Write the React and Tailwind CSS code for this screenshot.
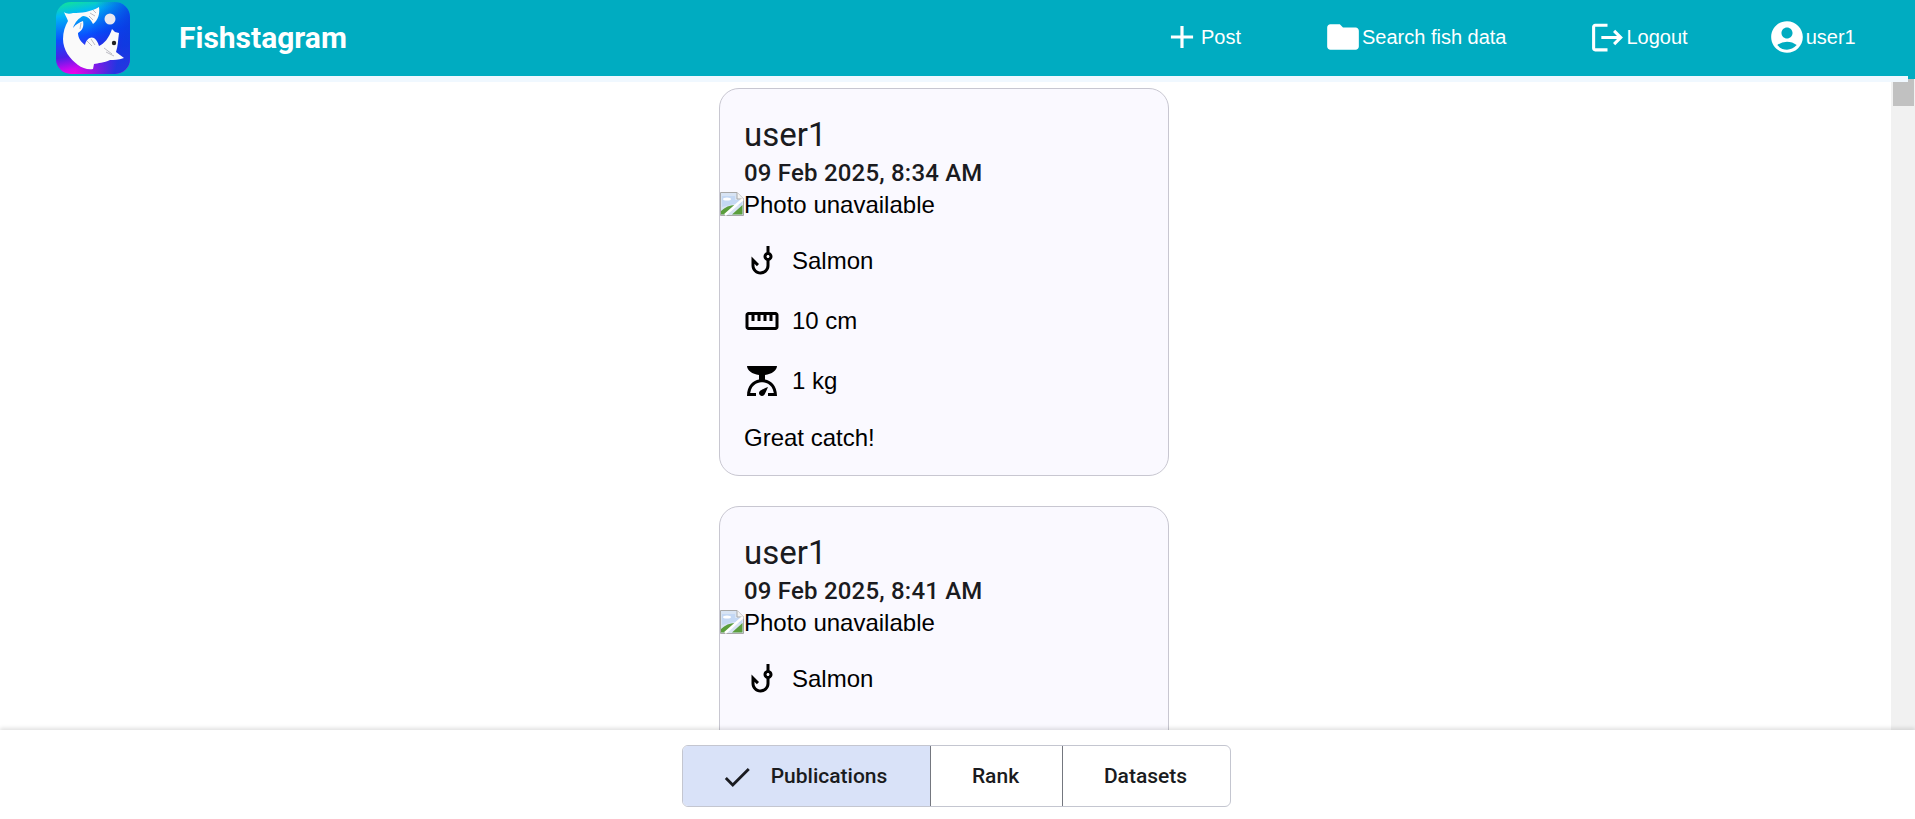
import React from "react";
import { MdAdd, MdFolder, MdLogout, MdAccountCircle, MdOutlinePhishing, MdOutlineStraighten, MdScale, MdCheck } from "react-icons/md";

function Logo() {
  return (
    <svg viewBox="0 0 74 72" className="w-[74px] h-[72px] shrink-0">
      <defs>
        <linearGradient id="lg" x1="0.2" y1="0" x2="0.4" y2="1">
          <stop offset="0" stopColor="#10e0a0" />
          <stop offset="0.16" stopColor="#00b8f5" />
          <stop offset="0.48" stopColor="#0a50ff" />
          <stop offset="0.72" stopColor="#4a20e8" />
          <stop offset="0.9" stopColor="#d008f0" />
          <stop offset="1" stopColor="#ff00e0" />
        </linearGradient>
        <linearGradient id="lg2" x1="0" y1="0" x2="1" y2="0.3">
          <stop offset="0.5" stopColor="#0030e0" stopOpacity="0" />
          <stop offset="1" stopColor="#0a3ce0" stopOpacity="0.9" />
        </linearGradient>
      </defs>
      <rect width="74" height="72" rx="15" fill="url(#lg)" />
      <rect width="74" height="72" rx="15" fill="url(#lg2)" />
      <path d="M8 10 C10 12 14 12 17 11 C25 11 35 10 43 5 C44 12 42 18 37 22 C35 18 32 14 27 14 C23 16 19 20 17 26 C20 22 24 20 27 19 C28 24 27 28 22 31 C22 36 25 40 29 43 C30 38 34 34 38 36 C41 38 42 41 43 44 C48 42 53 36 56 27 L59 30 L63 31 C62 38 62 44 60 50 L68 56 C62 58 58 58 54 58 C48 61 42 61 38 62 L37 67 C32 68 26 66 22 63 C14 57 7 48 7 37 C7 30 9 24 12 19 C11 16 9 13 8 10 Z" fill="#fafafa" />
      <path d="M37 8 L40 11 M34 11 L39 14 M33 14 L37 18 M31 39 L36 44 M35 37 L39 43 M48 46 L56 52 M50 50 L58 54 M25 21 L24 27" stroke="#b4b4bc" strokeWidth="0.9" fill="none" />
      <circle cx="54" cy="17" r="5.5" fill="#e8e8f0" />
      <circle cx="58" cy="41" r="2.2" fill="#222" />
    </svg>
  );
}

function BrokenImage() {
  return (
    <svg viewBox="0 0 24 24" className="w-6 h-6 shrink-0 mb-[3px]">
      <path d="M0.5 0.5 H17 L23.5 7 V23.5 H0.5 Z" fill="#d8e4f4" stroke="#a8a8a8" />
      <path d="M17 0.5 V7 H23.5" fill="#f4f4f4" stroke="#a8a8a8" />
      <path d="M2 4 H15 V8 H22 V14 L14 12 L2 15 Z" fill="#c4d8f4" />
      <ellipse cx="7" cy="7" rx="4" ry="1.6" fill="#fff" />
      <path d="M1 22.5 V19 C5 15 10 13 15 13 L5 22.5 Z M12 22.5 L22.5 13 V22.5 Z" fill="#5a9e3c" />
      <path d="M5 23 L23 7" stroke="#ffffff" strokeWidth="2.5" />
    </svg>
  );
}

function NavItem({ icon, label, className }) {
  return (
    <div className={"flex items-center text-white text-[20px] font-['Liberation_Sans',sans-serif] -translate-y-px " + className}>
      {icon}
      <span>{label}</span>
    </div>
  );
}

function Row({ icon, text }) {
  return (
    <div className="flex items-center h-9 gap-3 mt-6 text-black text-[24px] leading-9 font-['Liberation_Sans',sans-serif]">
      {icon}
      <span>{text}</span>
    </div>
  );
}

function Card({ date }) {
  return (
    <article className="w-[450px] shrink-0 rounded-[20px] border border-[#c8c7d1] bg-[#faf9ff] pt-[23px] pb-[19px] text-black">
      <div className="px-6 font-['Roboto',sans-serif] text-[33px] leading-[45px] text-[#1a1b20]">user1</div>
      <div className="px-6 font-['Roboto',sans-serif] font-medium text-[24px] leading-[32px] text-[#1a1b20] tracking-[0.2px]">{date}</div>
      <div className="flex items-end h-[29px] mt-px font-['Liberation_Sans',sans-serif] text-[24px] leading-7">
        <BrokenImage />
        <span>Photo unavailable</span>
      </div>
      <div className="px-6">
        <Row icon={<MdOutlinePhishing className="w-9 h-9 shrink-0" />} text="Salmon" />
        <Row icon={<MdOutlineStraighten className="w-9 h-9 shrink-0" />} text="10 cm" />
        <Row icon={<MdScale className="w-9 h-9 shrink-0" />} text="1 kg" />
        <p className="mt-[21px] font-['Liberation_Sans',sans-serif] text-[24px] leading-9">Great catch!</p>
      </div>
    </article>
  );
}

export default function App() {
  return (
    <div className="relative flex flex-col h-[819px] w-[1915px] overflow-hidden bg-white">
      <header className="flex items-center h-[76px] shrink-0 bg-[#00acc1]">
        <div className="ml-14"><Logo /></div>
        <div className="ml-[49px] -translate-y-px font-['Roboto',sans-serif] font-bold text-[30px] text-white">Fishstagram</div>
        <NavItem className="ml-[816px]" icon={<MdAdd className="w-[38px] h-[38px]" />} label="Post" />
        <NavItem className="ml-[83px]" icon={<MdFolder className="w-[38px] h-[38px]" />} label="Search fish data" />
        <NavItem className="ml-[83px]" icon={<MdLogout className="w-[37px] h-[37px]" />} label="Logout" />
        <NavItem className="ml-[80px]" icon={<MdAccountCircle className="w-[38px] h-[38px]" />} label="user1" />
      </header>

      <div className="flex flex-1 min-h-0">
        <main className="flex-1 min-w-0 overflow-hidden flex flex-col items-center pt-3 pr-[3px]">
          <div className="flex flex-col gap-[30px]">
            <Card date="09 Feb 2025, 8:34 AM" />
            <Card date="09 Feb 2025, 8:41 AM" />
          </div>
        </main>
        <div className="w-6 shrink-0 bg-[#f1f1f1] pt-[3px] pl-[2px] pr-px">
          <div className="h-[27px] bg-[#c1c1c1]" />
        </div>
      </div>

      <div className="absolute left-0 top-[76px] w-[1908px] h-[6px] bg-[#f0f8ff]" />
      <div className="absolute right-0 top-[76px] w-[7px] h-[3px] bg-[#00acc1]" />

      <footer className="relative flex justify-center h-[89px] shrink-0 bg-white pt-[15px] shadow-[0_-2px_4px_rgba(0,0,0,0.12)]">
        <div className="flex w-[549px] h-[62px] rounded-[6px] border border-[#c4c6d0] overflow-hidden font-['Roboto',sans-serif] font-medium text-[21px] text-[#1a1b20] -translate-x-[1px]">
          <div className="flex items-center justify-center gap-[17px] w-[248px] pr-[6px] pt-[2px] bg-[#d9e2f8] border-r border-[#74777f]">
            <MdCheck className="w-[34px] h-[34px]" />
            <span>Publications</span>
          </div>
          <div className="flex items-center justify-center w-[132px] pr-[2px] pt-[2px] border-r border-[#74777f]">Rank</div>
          <div className="flex items-center justify-center flex-1 pr-[2px] pt-[2px]">Datasets</div>
        </div>
      </footer>
    </div>
  );
}
